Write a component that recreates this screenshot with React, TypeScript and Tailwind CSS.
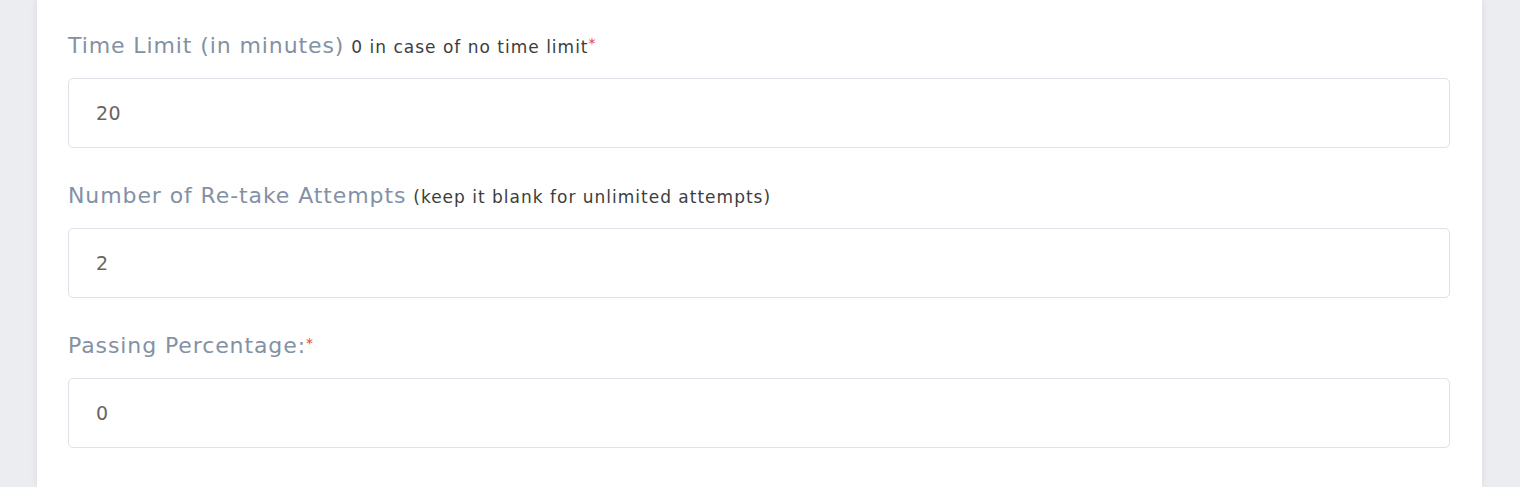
export default function App() {
    const fields = [
        { label: "Time Limit (in minutes)", hint: "0 in case of no time limit", required: true, value: "20" },
        { label: "Number of Re-take Attempts", hint: "(keep it blank for unlimited attempts)", required: false, value: "2" },
        { label: "Passing Percentage:", hint: "", required: true, value: "0" },
    ];

    return (
        <div className="h-[487px] overflow-hidden bg-[#ecedf0] pl-[37px] pr-[38px] font-['DejaVu_Sans',sans-serif]">
            <div className="h-full bg-white pl-[31px] pr-[32px] pt-[29px] shadow-[0_0_8px_rgba(0,0,0,0.08)]">
                {fields.map((f) => (
                    <div key={f.label} className="mb-[31px]">
                        <div className="flex h-[32px] items-baseline">
                            <span className="text-[22px] tracking-[0.9px] text-[#8391a5]">{f.label}</span>
                            {f.hint && (
                                <span className="ml-[7px] text-[17px] tracking-[1px] text-[#3d3d3d]">{f.hint}</span>
                            )}
                            {f.required && <span className="relative -top-[5px] text-[14px] text-[#e4452f]">*</span>}
                        </div>
                        <div className="mt-[17px] flex h-[70px] items-center rounded-[5px] border border-[#e1e1ea] pl-[27px] text-[19px] tracking-[0.5px] text-[#6a655f]">
                            {f.value}
                        </div>
                    </div>
                ))}
                <div className="flex h-[32px] items-baseline">
                    <span className="text-[22px] tracking-[0.9px] text-[#8391a5]">Enroll learners automatically</span>
                    <span className="ml-[40px] text-[17px] text-[#888]">OFF</span>
                    <span className="ml-[40px] text-[17px] text-[#1a8cff]">ON</span>
                </div>
            </div>
        </div>
    );
}
